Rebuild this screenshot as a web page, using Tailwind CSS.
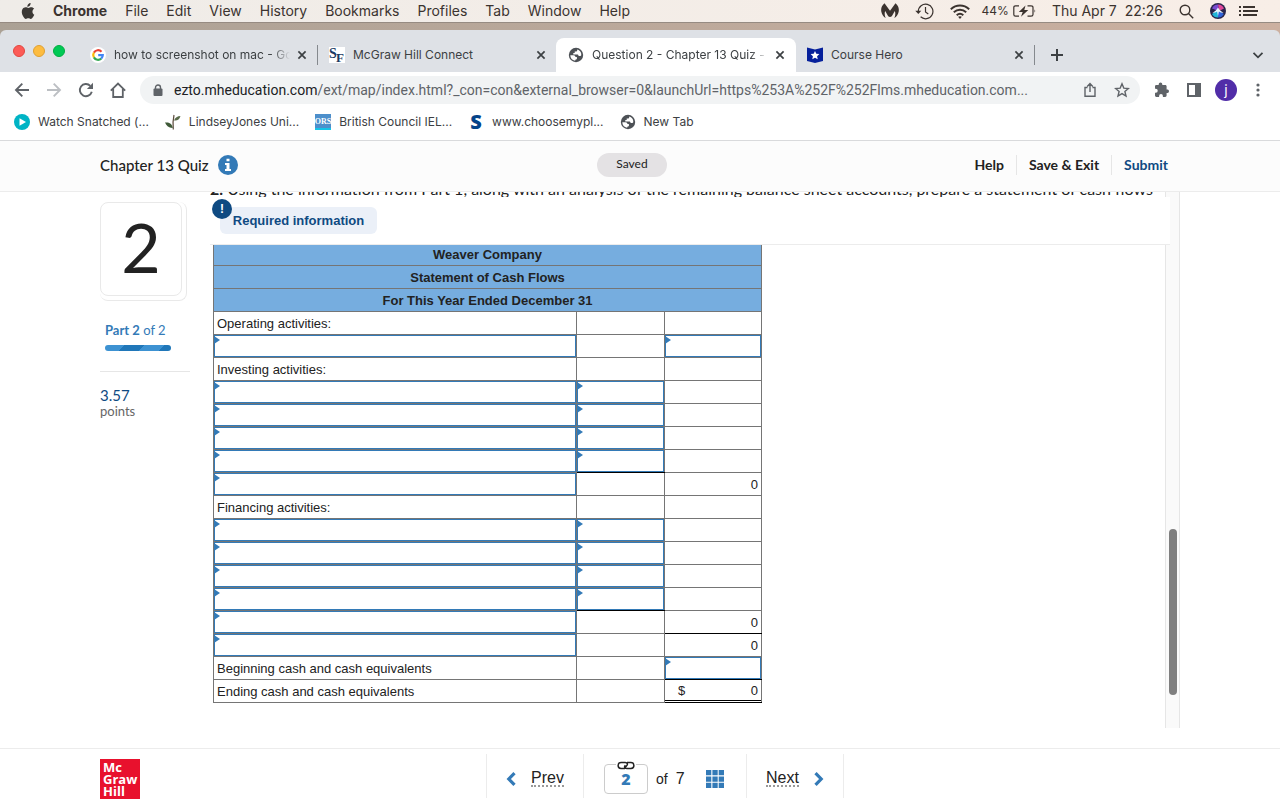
<!DOCTYPE html>
<html lang="en">
<head>
    <meta charset="UTF-8">
    <meta name="viewport" content="width=device-width, initial-scale=1.0">
    <title>Question 2 - Chapter 13 Quiz</title>
    <script src="https://cdn.jsdelivr.net/npm/@tailwindcss/browser@4"></script>
</head>
<body class="h-screen overflow-hidden flex flex-col bg-white text-[#222] font-['Inter',sans-serif]">

    <!-- Shared icons -->
    <svg class="hidden">
        <symbol id="close" viewBox="0 0 16 16"><path d="M4.4 4.4l7.2 7.2M11.6 4.4l-7.2 7.2" stroke="#3c4043" stroke-width="1.7" fill="none"/></symbol>
        <symbol id="globe" viewBox="0 0 16 16">
            <circle cx="8" cy="8" r="7.2" fill="#4d5156"/>
            <path d="M2.300 8.200h3.200c1.300 0 1.900.8 1.900 1.800h1.500v2.200c-.9 0-1.600.4-1.800 1.500C4.200 13.200 2.300 11.100 2.300 8.200zM9.200 2.500v.8c0 .9-.6 1.300-1.400 1.300H6.700v1.500H5.300v1.500h3.900c1 0 1.400.7 1.400 1.500h1.300c.7 0 1.200-.5 1.400-1.200.2-2.500-1.500-4.900-4.100-5.400z" fill="#fff"/>
        </symbol>
    </svg>

    <!-- Menu bar -->
    <div class="h-[22px] shrink-0 flex items-center justify-between pl-[21px] pr-[22px] bg-linear-to-r from-[#efece8] to-[#f8eee7] text-sm text-[#3b332f]">
        <div class="flex items-center gap-[18px]">
            <svg class="w-[14px] h-4" viewBox="0 0 14 16" fill="#3b3835"><path d="M9.600 0c.1 1.100-.3 2-.9 2.700-.6.700-1.500 1.200-2.400 1.100-.1-1 .400-2 .9-2.600C7.800.5 8.800.1 9.600 0zM13.300 11.700c-.4.900-.6 1.300-1.100 2.100-.7 1.100-1.500 2.100-2.500 2.100-.9 0-1.200-.6-2.400-.6s-1.500.6-2.400.6c-1 0-1.800-1.100-2.500-2.100C.6 11 .300 7.900 1.400 6.200c.8-1.200 2-1.900 3.200-1.900 1.200 0 1.900.6 2.900.6.9 0 1.500-.6 2.900-.6 1 0 2.100.6 2.800 1.500-2.500 1.400-2.100 4.900.1 5.900z"/></svg>
            <span class="font-bold">Chrome</span>
            <span>File</span>
            <span>Edit</span>
            <span>View</span>
            <span>History</span>
            <span>Bookmarks</span>
            <span>Profiles</span>
            <span>Tab</span>
            <span>Window</span>
            <span>Help</span>
        </div>
        <div class="flex items-center gap-4">
            <div class="flex items-center gap-3">
                <div class="flex items-center gap-4">
                    <svg class="w-[18px] h-4" viewBox="0 0 18 16" fill="#3b332f"><path d="M3.500.3C.8 2.400-.4 5.700.4 9c.5 2.400 2.100 4.700 4.300 6.100C3.500 12.400 3.400 9.800 4.200 8l3 5.200q1.800 1.500 3.600 0l3-5.200c.8 1.800.7 4.400-.5 7.100 2.200-1.400 3.800-3.700 4.300-6.100.8-3.300-.4-6.600-3.100-8.700L9 7.800z"/></svg>
                    <svg class="w-[19px] h-[17px]" viewBox="0 0 19 17" fill="none" stroke="#3b332f" stroke-width="1.200"><path d="M3.300 8.500a7.300 7.300 0 1 1 2.300 5.300" /><path d="M10.500 4v5l2.800 2"/><path d="M.3 7.700h6l-3 3.400z" fill="#3b332f" stroke="none"/></svg>
                    <svg class="w-5 h-[15px]" viewBox="0 0 20 15" fill="none" stroke="#3b332f" stroke-width="1.900"><path d="M.8 5.300c5.300-5 13.100-5 18.400 0M3.800 8.300c3.600-3.400 8.800-3.400 12.400 0M6.700 11.200c2-1.900 4.600-1.900 6.600 0"/><path d="M8.100 12.800L10 15l1.900-2.200c-1.100-.9-2.700-.9-3.800 0z" fill="#3b332f" stroke="none"/></svg>
                </div>
                <div class="flex items-center gap-1">
                    <span class="text-xs">44%</span>
                    <svg class="w-[23px] h-3" viewBox="0 0 23 12" fill="none" stroke="#3b332f" stroke-width="1.200"><path d="M6 .8H2.500Q.8.8.8 2.500v7Q.8 11.200 2.500 11.200H6M14.500.8H18q2 0 2 1.700v7q0 1.700-2 1.700h-3.500"/><path d="M12.500.5L5.800 7h3.900L8 11.700 15.300 5h-4z" fill="#3b332f" stroke="none"/><path d="M21.500 4.200q1.500 1.800 0 3.600z" fill="#3b332f" stroke="none"/></svg>
                </div>
            </div>
            <span class="whitespace-pre">Thu Apr 7  22:26</span>
            <svg class="w-[15px] h-[15px]" viewBox="0 0 15 15" fill="none" stroke="#3b332f" stroke-width="1.400"><circle cx="6" cy="6" r="4.800"/><path d="M9.500 9.500l4.700 4.700"/></svg>
            <svg class="w-4 h-4" viewBox="0 0 16 16"><circle cx="8" cy="8" r="8" fill="#28244a"/><path d="M8 1.500a6.500 6.500 0 0 1 6 4L9 8z" fill="#e0479a"/><path d="M2 5.500a6.500 6.500 0 0 1 6-4L8.500 8z" fill="#7a4bd0"/><path d="M2 11a6.500 6.500 0 0 0 6 3.500L8 7z" fill="#1fb5d8"/><path d="M8 14.500a6.500 6.500 0 0 0 5.800-3.500L8 7z" fill="#2f62d8"/><path d="M8 4.500c1.500 2.500 3.300 4 5.500 5.500-2-.2-3.500-.6-4.600-1.500L8 13l-.9-4.500C6 9.400 4.500 9.800 2.500 10 4.700 8.500 6.500 7 8 4.500z" fill="#e8f6ff"/></svg>
            <svg class="w-[19px] h-3 -ml-[3px]" viewBox="0 0 19 12" fill="#3b332f"><path d="M0 1h2v2H0zM4 1h12v2H4zM0 5h2v2H0zM4 5h15v2H4zM0 9h2v2H0zM4 9h14v2H4z"/></svg>
        </div>
    </div>

    <!-- Tab strip -->
    <div class="shrink-0 pt-[7px] border-t border-[#968b82] bg-linear-to-r from-[#aba195] to-[#ccb0a0]">
        <div class="h-[42px] flex items-end rounded-t-md bg-[#dee1e6] text-xs text-[#3c4043]">
            <div class="w-[78px] h-[42px] shrink-0 flex items-center gap-2 pl-[13px]">
                <span class="w-3 h-3 rounded-full bg-[#fc5b57] border border-[#e2463f]"></span>
                <span class="w-3 h-3 rounded-full bg-[#fdbc40] border border-[#dfa033]"></span>
                <span class="w-3 h-3 rounded-full bg-[#00c955] border border-[#00ae41]"></span>
            </div>
            <div class="w-[240px] h-[34px] flex items-center">
                <div class="h-5 flex-1 min-w-0 flex items-center gap-1 pl-3 pr-[7px] border-r border-[#85898e]">
                    <svg class="w-4 h-4 mr-1 shrink-0" viewBox="0 0 16 16"><circle cx="8" cy="8" r="8" fill="#fff"/><g fill="none" stroke-width="2.200"><path d="M3.900 5.600A4.800 4.800 0 0 1 11.500 4.700" stroke="#ea4335"/><path d="M3.900 5.600a4.800 4.800 0 0 0 0 4.800" stroke="#fbbc05"/><path d="M3.900 10.400a4.800 4.800 0 0 0 7.300 1.200" stroke="#34a853"/><path d="M11.200 11.600A4.800 4.800 0 0 0 12.800 8.100H8.200" stroke="#4285f4"/></g></svg>
                    <span class="flex-1 min-w-0 overflow-hidden whitespace-nowrap mask-r-from-90%">how to screenshot on mac - Go</span>
                    <button aria-label="Close tab"><svg class="w-4 h-4"><use href="#close"/></svg></button>
                </div>
            </div>
            <div class="w-[238px] h-[34px] flex items-center gap-2 pl-[11px] pr-[7px]">
                <svg class="w-4 h-4 shrink-0" viewBox="0 0 16 16" font-family="Liberation Serif" font-weight="bold" fill="#1b3a63"><path d="M0 0h16v16H0z" fill="#fff"/><text x="0" y="11" font-size="14">S</text><text x="7" y="15" font-size="13">F</text></svg>
                <span class="flex-1">McGraw Hill Connect</span>
                <button aria-label="Close tab"><svg class="w-4 h-4"><use href="#close"/></svg></button>
            </div>
            <div class="w-[240px] h-[34px] flex items-center gap-1 pl-3 pr-2 rounded-t-lg bg-white">
                <svg class="w-4 h-4 mr-1 shrink-0"><use href="#globe"/></svg>
                <span class="flex-1 min-w-0 overflow-hidden whitespace-nowrap mask-r-from-90%">Question 2 - Chapter 13 Quiz -</span>
                <button aria-label="Close tab"><svg class="w-4 h-4"><use href="#close"/></svg></button>
            </div>
            <div class="w-[239px] h-[34px] flex items-center">
                <div class="h-5 flex-1 flex items-center gap-2 pl-[11px] pr-[7px] border-r border-[#85898e]">
                    <svg class="w-4 h-4 shrink-0" viewBox="0 0 16 16"><path d="M0 .5l8 2 8-2v13.500l-8 2-8-2z" fill="#06209b"/><path d="M8 4l1.300 2.800 3.100.3-2.300 2.100.6 3L8 10.700l-2.700 1.500.6-3-2.300-2.100 3.100-.3z" fill="#fff"/></svg>
                    <span class="flex-1">Course Hero</span>
                    <button aria-label="Close tab"><svg class="w-4 h-4"><use href="#close"/></svg></button>
                </div>
            </div>
            <div class="flex-1 h-[34px] flex items-center justify-between pl-[15px] pr-[15px]">
                <button aria-label="New tab"><svg class="w-[14px] h-[14px]" viewBox="0 0 14 14"><path d="M7 1v12M1 7h12" stroke="#3c4043" stroke-width="2"/></svg></button>
                <button aria-label="Search tabs"><svg class="w-[14px] h-[14px]" viewBox="0 0 14 14"><path d="M2.500 4.800L7 9.300l4.500-4.500" stroke="#3c4043" stroke-width="1.800" fill="none"/></svg></button>
            </div>
        </div>
    </div>

    <!-- Toolbar -->
    <div class="h-9 shrink-0 flex items-center pl-[14px] pr-[14px] bg-white">
        <div class="flex items-center gap-4 mr-[14px]">
            <button aria-label="Back"><svg class="w-4 h-4" viewBox="0 0 16 16" fill="none" stroke="#5f6368" stroke-width="1.900"><path d="M15 8H2.200M8.300 1.700L2 8l6.300 6.300"/></svg></button>
            <button aria-label="Forward"><svg class="w-4 h-4" viewBox="0 0 16 16" fill="none" stroke="#bcbfc3" stroke-width="1.900"><path d="M1 8h12.800M7.700 1.700L14 8l-6.300 6.300"/></svg></button>
            <button aria-label="Reload"><svg class="w-4 h-4" viewBox="0 0 16 16"><path d="M13.800 9.800A6.100 6.100 0 1 1 12.300 3.800" fill="none" stroke="#5f6368" stroke-width="1.900"/><path d="M15 .8v6.100H8.900z" fill="#5f6368"/></svg></button>
            <button aria-label="Home"><svg class="w-4 h-4" viewBox="0 0 16 16" fill="none" stroke="#5f6368" stroke-width="1.800"><path d="M.8 8.600L8 1.600l7.200 7M3.200 7v8h9.600V7"/></svg></button>
        </div>
        <div class="h-7 flex-1 min-w-0 flex items-center rounded-full pl-[13px] pr-[10px] bg-[#f1f3f4] text-sm text-[#5f6368]">
            <svg class="w-[10px] h-[13px] mr-[11px] shrink-0" viewBox="0 0 10 13"><path d="M2.500 5V3.500a2.500 2.500 0 0 1 5 0V5" fill="none" stroke="#5f6368" stroke-width="1.400"/><rect x=".5" y="4.500" width="9" height="7.500" rx="1" fill="#5f6368"/></svg>
            <p class="flex-1 min-w-0 truncate font-['Roboto',sans-serif]"><span class="text-[#202124]">ezto.mheducation.com</span>/ext/map/index.html?_con=con&amp;external_browser=0&amp;launchUrl=https%253A%252F%252Flms.mheducation.com...</p>
            <button class="ml-4" aria-label="Share"><svg class="w-4 h-4" viewBox="0 0 16 16" fill="none" stroke="#5f6368" stroke-width="1.400"><path d="M5.500 5.500h-2.500v8.800h10V5.500h-2.500M8 10V1.700M5.200 4.400L8 1.600l2.800 2.800"/></svg></button>
            <button class="ml-4" aria-label="Bookmark this page"><svg class="w-4 h-4" viewBox="0 0 16 16"><path d="M8 1.800l1.800 4.300 4.600.4-3.500 3 1.100 4.500L8 11.600 4 14l1.100-4.500-3.500-3 4.600-.4z" fill="none" stroke="#5f6368" stroke-width="1.400"/></svg></button>
        </div>
        <div class="flex items-center gap-4 ml-[14px]">
            <button aria-label="Extensions"><svg class="w-4 h-4" viewBox="0 0 16 16"><path d="M13.600 7.400h-1V4.300c0-.8-.6-1.400-1.400-1.400H8.300V2.300a1.800 1.800 0 0 0-3.600 0v.6H2.300C1.500 2.900 1 3.500 1 4.300v2.500h.8a1.900 1.900 0 0 1 0 3.900H1v2.900c0 .8.600 1.400 1.400 1.400h2.700v-1a1.900 1.900 0 0 1 3.800 0v1h2.300c.8 0 1.400-.6 1.400-1.400v-2.700h1a1.800 1.800 0 0 0 0-3.500z" fill="#5f6368"/></svg></button>
            <button aria-label="Side panel"><svg class="w-4 h-4" viewBox="0 0 16 16"><path d="M1 1h14v14H1zM3 3v10h6V3z" fill="#5f6368" fill-rule="evenodd"/></svg></button>
            <button class="w-[22px] h-[22px] -mx-[3px] rounded-full bg-[#512da8] text-white text-sm leading-[22px]">j</button>
            <button aria-label="Menu"><svg class="w-4 h-4" viewBox="0 0 16 16" fill="#5f6368"><circle cx="8" cy="3" r="1.600"/><circle cx="8" cy="8" r="1.600"/><circle cx="8" cy="13" r="1.600"/></svg></button>
        </div>
    </div>

    <!-- Bookmarks bar -->
    <div class="h-[33px] shrink-0 flex items-center gap-4 pl-[14px] pb-[5px] border-b border-[#d9dadc] text-xs text-[#3c4043]">
        <a href="#" class="flex items-center gap-2"><svg class="w-4 h-4" viewBox="0 0 16 16"><circle cx="8" cy="8" r="8" fill="#00b4c5"/><path d="M5.500 4.200L12 8l-6.500 3.800z" fill="#fff"/></svg>Watch Snatched (...</a>
        <a href="#" class="flex items-center gap-2"><svg class="w-4 h-4" viewBox="0 0 16 16"><path d="M8.300 15.500C7.700 11 8 5.500 9 1" stroke="#5b4a3c" stroke-width="1.200" fill="none"/><path d="M0 8.500c4-.5 7 1 7.800 5.500C4 14.200 1.500 12 0 8.500z" fill="#3f5a38"/><path d="M15.500 2c-1 3.500-3.200 5-6.500 4.500C10 3.500 12.500 2 15.500 2z" fill="#5a6b4a"/></svg>LindseyJones Uni...</a>
        <a href="#" class="flex items-center gap-2"><svg class="w-4 h-4" viewBox="0 0 16 16"><path d="M0 0h16v16H0z" fill="#4d8fcb"/><path d="M0 14h16v2H0z" fill="#15c4e8"/><text x="8" y="10" text-anchor="middle" font-family="Liberation Serif" font-size="8" font-weight="bold" fill="#fff">ORS</text></svg>British Council IEL...</a>
        <a href="#" class="flex items-center gap-2"><span class="w-4 text-center font-['Open_Sans',sans-serif] font-extrabold text-xl leading-4 text-[#044389]">S</span>www.choosemypl...</a>
        <a href="#" class="flex items-center gap-2"><svg class="w-4 h-4"><use href="#globe"/></svg>New Tab</a>
    </div>

    <!-- Quiz header -->
    <header class="h-[51px] shrink-0 grid grid-cols-[1fr_auto_1fr] items-center px-[100px] pb-[2px] bg-[#fcfcfc] border-b border-[#ececec] font-['Lato',sans-serif]">
        <div class="flex items-center gap-[10px]">
            <h1 class="text-[15px] leading-5 font-medium">Chapter 13 Quiz</h1>
            <button aria-label="Quiz information"><svg class="w-5 h-5" viewBox="0 0 20 20"><circle cx="10" cy="10" r="10" fill="#337ab7"/><path d="M8.500 3.700h3v2.600h-3zM7 8h4.500v6H13v2H7v-2h1.500v-4H7z" fill="#fff"/></svg></button>
        </div>
        <span class="w-[70px] h-6 mr-4 rounded-full bg-[#e4e2e4] text-center text-xs leading-[22px]">Saved</span>
        <div class="flex items-center justify-end text-sm font-bold">
            <button class="h-5 px-3">Help</button>
            <button class="h-5 px-3 border-x border-[#e6e6e6]">Save &amp; Exit</button>
            <button class="h-5 px-3 text-[#0f4a82]">Submit</button>
        </div>
    </header>

    <!-- Question -->
    <main class="flex-1 min-h-0 flex px-[100px] pb-5 overflow-hidden">
        <aside class="w-[90px] mr-5 shrink-0 pt-[10px] font-['Lato',sans-serif]">
            <div class="w-[87px] pr-1 pb-1 border-r border-b border-[#e9e9e9] rounded-lg">
                <div class="h-[94px] flex items-center justify-center pb-1 bg-white border border-[#e9e9e9] rounded-lg text-[68px] leading-none">2</div>
            </div>
            <p class="mt-[19px] ml-[5px] text-[13px] leading-5 text-[#337ab7]"><b>Part 2</b> of 2</p>
            <div class="mt-[5px] ml-[5px] w-[66px] h-[6px] rounded-full bg-[repeating-linear-gradient(135deg,#3d92d2_0_14px,#2077b9_14px_28px)]"></div>
            <div class="mt-5 pt-[14px] border-t border-[#e6e6e6]">
                <p class="text-[15px] leading-[18px] text-[#0f4a82]">3.57</p>
                <p class="text-[13px] leading-[14px] text-[#666]">points</p>
            </div>
        </aside>

        <section class="relative flex-1 min-w-0 overflow-hidden">
            <p class="h-[50px] -mt-[13px] text-base leading-5 whitespace-nowrap font-['Lato',sans-serif]"><b>2.</b> Using the information from Part 1, along with an analysis of the remaining balance sheet accounts, prepare a statement of cash flows</p>

            <table class="ml-[3px] mt-[13px] w-[548px] table-fixed border-collapse text-[13px] leading-5 font-['Liberation_Sans',sans-serif]">
                <colgroup>
                    <col class="w-[363px]">
                    <col class="w-[88px]">
                    <col class="w-[97px]">
                </colgroup>
                <thead class="bg-[#76addf]">
                    <tr><th colspan="3" class="p-0 pt-[2px] border border-[#757575]">Weaver Company</th></tr>
                    <tr><th colspan="3" class="p-0 pt-[2px] border border-[#757575]">Statement of Cash Flows</th></tr>
                    <tr><th colspan="3" class="p-0 pt-[2px] border border-[#757575]">For This Year Ended December 31</th></tr>
                </thead>
                <tbody id="cashFlows"></tbody>
            </table>

            <!-- Pinned bar above the table -->
            <div class="absolute top-[5px] left-0 right-[10px] h-12 bg-white border-b border-[#ececec] z-10">
                <button class="absolute left-[10px] top-[10px] h-[27px] w-[157px] rounded-md bg-[#ebf0f8] text-[13px] font-bold text-[#0f4a82] font-['Liberation_Sans',sans-serif]">Required information</button>
                <span class="absolute left-[2px] top-[2px] w-5 h-5 rounded-full bg-[#0f4a82] text-white text-xs leading-5 font-bold text-center font-['Liberation_Sans',sans-serif]">!</span>
            </div>

            <!-- Scrollbar -->
            <div class="absolute top-0 bottom-0 right-0 w-[15px] border-x border-[#e6e6e6] bg-[#fafafa]">
                <div class="absolute left-[3px] top-[337px] w-2 h-[166px] rounded-full bg-[#7f7f7f]"></div>
            </div>
        </section>
    </main>

    <!-- Quiz footer -->
    <footer class="h-[52px] shrink-0 flex items-start px-[100px] border-t border-[#ececec]">
        <div class="w-10 h-10 mt-[10px] pl-[3px] pt-[2px] bg-[#e8112d] text-white text-[13px] leading-3 font-bold font-['Open_Sans',sans-serif]">Mc<br>Graw<br>Hill</div>
        <nav class="ml-[346px] mt-[5px] h-11 flex items-center border-x border-[#ececec] text-base font-['Liberation_Sans',sans-serif]">
            <a href="#" class="w-24 flex items-center gap-[15px] pt-[5px] pl-[19px]">
                <svg class="w-[10px] h-[14px]" viewBox="0 0 10 14" fill="none" stroke="#337ab7" stroke-width="3.200"><path d="M8.500 1.200L2.800 7l5.700 5.800"/></svg>
                <span class="leading-[14px] border-b-2 border-dotted border-[#999]">Prev</span>
            </a>
            <div class="h-11 w-[164px] flex items-center pt-[5px] pl-5 border-x border-[#ececec]">
                <div class="relative">
                    <input type="text" value="2" aria-label="Question number" class="block w-11 h-[30px] rounded border border-[#ccc] text-center text-base font-extrabold text-[#337ab7] font-['Open_Sans',sans-serif]">
                    <svg class="absolute left-[12px] -top-[3px] w-5 h-[9px] bg-white" viewBox="0 0 20 9" fill="none" stroke="#222" stroke-width="1.500"><path d="M9 7.400H5a2.900 2.900 0 0 1 0-5.800h4.200c2.400 0 2.800 2 1.400 3.200L9.400 6.200M11 1.600h4a2.900 2.900 0 0 1 0 5.800h-4.200c-2.400 0-2.800-2-1.400-3.200"/></svg>
                </div>
                <span class="ml-2 text-sm">of</span>
                <span class="ml-2 text-base">7</span>
                <button class="ml-[21px]" aria-label="All questions"><svg class="w-[18px] h-[18px]" viewBox="0 0 18 18" fill="#337ab7"><path d="M0 0h5.300v5.300H0zM6.400 0h5.300v5.300H6.400zM12.700 0H18v5.300h-5.300zM0 6.400h5.300v5.300H0zM6.400 6.400h5.300v5.300H6.400zM12.700 6.400H18v5.300h-5.300zM0 12.700h5.300V18H0zM6.400 12.700h5.300V18H6.400zM12.700 12.700H18V18h-5.300z"/></svg></button>
            </div>
            <a href="#" class="w-24 flex items-center gap-[15px] pt-[5px] pl-[19px]">
                <span class="leading-[14px] border-b-2 border-dotted border-[#999]">Next</span>
                <svg class="w-[10px] h-[14px]" viewBox="0 0 10 14" fill="none" stroke="#337ab7" stroke-width="3.200"><path d="M1.500 1.200L7.200 7l-5.700 5.800"/></svg>
            </a>
        </nav>
    </footer>

    <script>
        // One entry per cell: '' empty, '?' answer field, '_' suffix draws the black rule below
        const rows = [
            ['Operating activities:', '', ''],
            ['?', '', '?'],
            ['Investing activities:', '', ''],
            ['?', '?', ''],
            ['?', '?', ''],
            ['?', '?', ''],
            ['?', '?_', ''],
            ['?', '', '0'],
            ['Financing activities:', '', ''],
            ['?', '?', ''],
            ['?', '?', ''],
            ['?', '?', ''],
            ['?', '?_', ''],
            ['?', '', '0_'],
            ['?', '', '0'],
            ['Beginning cash and cash equivalents', '', '?_'],
            ['Ending cash and cash equivalents', '', '$_']
        ];

        function cell(value, row, col) {
            const rule = value.endsWith('_') ? ' border-b-black' : '';
            const text = value.replace('_', '');
            let inner = text;
            if (text === '?') {
                inner = `<input type="text" aria-label="Row ${row + 1}, column ${col + 1}" class="block w-full h-[22px] px-1 bg-white border border-[#337ab7]">
                    <span class="absolute left-0 top-[1px] border-y-4 border-y-transparent border-l-[6px] border-l-[#337ab7]"></span>`;
            } else if (text === '$') {
                inner = '<div class="h-[21px] mb-px flex justify-between pt-px pl-[13px] pr-[3px] border-b border-black"><span>$</span><span>0</span></div>';
            } else if (text) {
                inner = col === 0 ? `<div class="pt-[2px] pl-[3px]">${text}</div>` : `<div class="pt-[2px] pr-[3px] text-right">${text}</div>`;
            }
            return `<td class="relative h-[23px] p-0 border border-[#757575]${rule}">${inner}</td>`;
        }

        document.getElementById('cashFlows').innerHTML = rows
            .map((cells, row) => `<tr>${cells.map((value, col) => cell(value, row, col)).join('')}</tr>`)
            .join('');
    </script>
</body>
</html>
